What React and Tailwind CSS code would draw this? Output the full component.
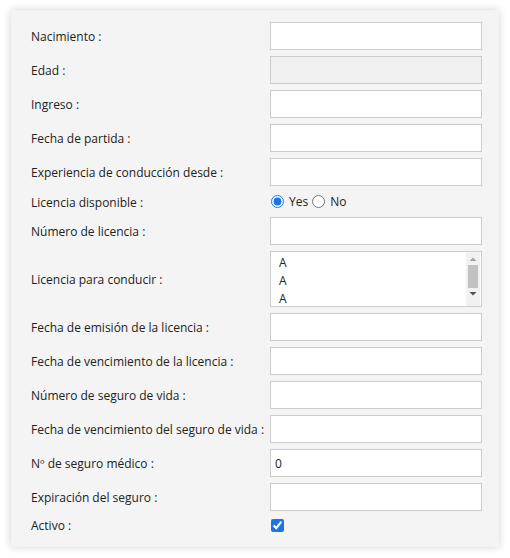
import React from 'react'

const font = { fontFamily: '"Open Sans", "Liberation Sans", sans-serif' }

function Row({ label, children, h = 'h-[28px]' }) {
  return (
    <div className={`flex items-center ${h}`}>
      <label className="w-[239px] shrink-0 pt-[2px] text-[12px] text-[#222]">{label}</label>
      {children}
    </div>
  )
}

function TextBox({ value = '', disabled = false }) {
  return (
    <input
      type="text"
      defaultValue={value}
      disabled={disabled}
      className={`w-[212px] h-[28px] border border-[#cccccc] px-[4px] text-[12px] text-[#222] outline-none ${disabled ? 'bg-[#f0f0f0]' : 'bg-white'}`}
    />
  )
}

export default function App() {
  const fields = [
    'Fecha de emisión de la licencia :',
    'Fecha de vencimiento de la licencia :',
    'Número de seguro de vida :',
    'Fecha de vencimiento del seguro de vida :',
  ]

  return (
    <div className="bg-white w-[510px] h-[558px] pt-[10px] pl-[11px]" style={font}>
      <div className="w-[488px] h-[537px] bg-[#f4f4f4] shadow-[0_0_8px_rgba(0,0,0,0.18)] pt-[12px] pl-[20px] flex flex-col gap-[6px]">
        <Row label="Nacimiento :"><TextBox /></Row>
        <Row label="Edad :"><TextBox disabled /></Row>
        <Row label="Ingreso :"><TextBox /></Row>
        <Row label="Fecha de partida :"><TextBox /></Row>
        <Row label="Experiencia de conducción desde :"><TextBox /></Row>
        <Row label="Licencia disponible :" h="h-[19px]">
          <div className="flex items-center text-[12px] text-[#222]">
            <input type="radio" name="lic" defaultChecked className="w-[13px] h-[13px] ml-[1px] accent-[#1a73e8]" />
            <span className="ml-[5px]">Yes</span>
            <input type="radio" name="lic" className="w-[13px] h-[13px] ml-[4px]" />
            <span className="ml-[5px]">No</span>
          </div>
        </Row>
        <Row label="Número de licencia :"><TextBox /></Row>
        <Row label="Licencia para conducir :" h="h-[56px]">
          <div className="w-[212px] h-[56px] border border-[#cccccc] bg-white flex">
            <div className="flex-1 pl-[8px] pt-[2px] text-[12px] text-[#222] leading-[18px]">
              <div>A</div>
              <div>A</div>
              <div>A</div>
            </div>
            <div className="w-[14px] mr-[1px] bg-[#f1f1f1] flex flex-col items-center">
              <svg width="8" height="12" viewBox="0 0 8 12" className="mt-[1px]">
                <path d="M0.5 8 L4 4.5 L7.5 8 Z" fill="#a3a3a3" />
              </svg>
              <div className="w-[10px] h-[23px] bg-[#c1c1c1]" />
              <svg width="8" height="12" viewBox="0 0 8 12">
                <path d="M0.5 4 L4 7.5 L7.5 4 Z" fill="#505050" />
              </svg>
            </div>
          </div>
        </Row>
        {fields.map(f => (
          <Row key={f} label={f}><TextBox /></Row>
        ))}
        <Row label="Nº de seguro médico :"><TextBox value="0" /></Row>
        <Row label="Expiración del seguro :"><TextBox /></Row>
        <Row label="Activo :" h="h-[16px]">
          <input type="checkbox" defaultChecked className="w-[13px] h-[13px] ml-[1px] accent-[#1a73e8]" />
        </Row>
      </div>
    </div>
  )
}
